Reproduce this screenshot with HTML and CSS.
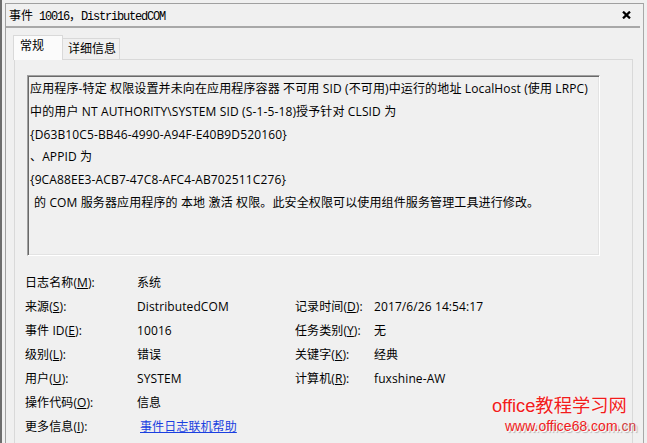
FILE: index.html
```html
<!DOCTYPE html>
<html lang="zh-CN">
<head>
<meta charset="utf-8">
<title>事件 10016，DistributedCOM</title>
<link rel="stylesheet" href="styles.css">
</head>
<body>
<div class="screen">
  <div class="frame">
    <div class="titlebar">
      <span class="title"><span class="cjk">事件</span> 10016<span class="cjk">，</span>DistributedCOM</span>
      <svg class="close" width="9" height="8" viewBox="0 0 9 8"><path d="M1 0.6 L8 7.4 M8 0.6 L1 7.4" stroke="#000" stroke-width="2.2" fill="none"/></svg>
    </div>
    <div class="rule"></div>
    <div class="tabs">
      <div class="tab active">常规</div>
      <div class="tab">详细信息</div>
    </div>
    <div class="panel">
      <div class="desc">
        <div class="line">应用程序-特定 权限设置并未向在应用程序容器 不可用 SID (不可用)中运行的地址 LocalHost (使用 LRPC)</div>
        <div class="line">中的用户 NT AUTHORITY\SYSTEM SID (S-1-5-18)授予针对 CLSID 为</div>
        <div class="line">{D63B10C5-BB46-4990-A94F-E40B9D520160}</div>
        <div class="line">、APPID 为</div>
        <div class="line">{9CA88EE3-ACB7-47C8-AFC4-AB702511C276}</div>
        <div class="line indent">的 COM 服务器应用程序的 本地 激活 权限。此安全权限可以使用组件服务管理工具进行修改。</div>
      </div>
      <div class="fields">
        <div>日志名称(<u>M</u>):</div><div>系统</div><div></div><div></div>
        <div>来源(<u>S</u>):</div><div>DistributedCOM</div><div>记录时间(<u>D</u>):</div><div>2017/6/26 14:54:17</div>
        <div>事件 ID(<u>E</u>):</div><div>10016</div><div>任务类别(<u>Y</u>):</div><div>无</div>
        <div>级别(<u>L</u>):</div><div>错误</div><div>关键字(<u>K</u>):</div><div>经典</div>
        <div>用户(<u>U</u>):</div><div>SYSTEM</div><div>计算机(<u>R</u>):</div><div>fuxshine-AW</div>
        <div>操作代码(<u>O</u>):</div><div>信息</div><div></div><div></div>
        <div>更多信息(<u>I</u>):</div><div><a class="link" href="#">事件日志联机帮助</a></div><div></div><div></div>
      </div>
    </div>
  </div>
  <div class="watermark">
    <div class="wm1">office教程学习网</div>
    <div class="wm2">www.office68.com<span class="cn">.cn</span></div>
  </div>
</div>
</body>
</html>
```
FILE: styles.css
```css
html, body {
  margin: 0;
  background: #f0f0f0;
}

.screen {
  position: relative;
  width: 647px;
  height: 443px;
  overflow: hidden;
  box-sizing: border-box;
  border-left: 2px solid #6d6d6d;
  padding: 3px 0 0 3px;
  font-family: "Open Sans", "Noto Sans CJK SC", sans-serif;
  font-size: 12px;
  color: #000;
}

.frame {
  width: 639px;
  height: 440px;
  box-sizing: border-box;
  border-top: 1px solid #a0a0a0;
  border-left: 1px solid #a0a0a0;
  border-right: 1px solid #a8a8a8;
  display: flex;
  flex-direction: column;
}

.titlebar {
  height: 22px;
  display: flex;
  align-items: center;
  justify-content: space-between;
  padding: 0 12px 0 3px;
}

.title {
  font-family: "Liberation Mono", monospace;
  font-size: 12px;
  letter-spacing: -1.2px;
  white-space: nowrap;
}

.title .cjk {
  font-family: "Noto Sans CJK SC", sans-serif;
  font-size: 12px;
  letter-spacing: 0;
}

.close {
  display: block;
}

.rule {
  height: 2px;
  background: #a8a8a8;
  margin-right: 3px;
}

.tabs {
  display: flex;
  align-items: flex-end;
  height: 24px;
  margin: 7px 0 0 7px;
  position: relative;
  z-index: 1;
}

.tab {
  box-sizing: border-box;
  line-height: 16px;
  white-space: nowrap;
}

.tab.active {
  width: 50px;
  height: 25px;
  margin-bottom: -1px;
  padding: 2px 0 0 6px;
  background: #fbfbfb;
  border: 1px solid #d9d9d9;
  border-bottom: none;
}

.tab:not(.active) {
  width: 57px;
  height: 21px;
  padding: 2px 0 0 5px;
  border-top: 1px solid #d9d9d9;
  border-right: 1px solid #d9d9d9;
}

.panel {
  flex: 1;
  width: 619px;
  box-sizing: border-box;
  margin-left: 8px;
  border: 1px solid #d9d9d9;
  border-bottom: none;
  padding: 15px 0 0 10px;
}

.desc {
  width: 573px;
  height: 181px;
  box-sizing: border-box;
  margin-left: 2px;
  border-top: 1px solid #a0a0a0;
  border-left: 1px solid #a0a0a0;
  border-right: 1px solid #ffffff;
  border-bottom: 1px solid #ffffff;
  box-shadow: inset 1px 1px 0 #696969, inset -1px -1px 0 #e3e3e3;
  padding: 2px 0 0 2px;
  line-height: 22.75px;
  letter-spacing: 0.13px;
}

.line {
  white-space: nowrap;
}

.line.indent {
  padding-left: 4px;
}

.fields {
  display: grid;
  grid-template-columns: 112px 158px 79px auto;
  grid-auto-rows: 24px;
  align-items: center;
  margin-top: 14px;
  white-space: nowrap;
  letter-spacing: 0.1px;
}

.link {
  color: #1a3fe0;
  text-decoration: underline;
  margin-left: 3px;
}

.watermark {
  position: absolute;
  left: 490px;
  top: 394px;
  font-family: "Liberation Sans", "Noto Sans CJK SC", sans-serif;
  color: #f21c1c;
  white-space: nowrap;
}

.wm1 {
  font-size: 18.3px;
  line-height: 23px;
  text-shadow: 0 0 2px #ffffff;
}

.wm2 {
  font-size: 14px;
  line-height: 18px;
  margin-left: 13px;
  text-shadow: 1px 1px 0 #ffffff, 2px 2px 1px #b0b0b0;
}

.wm2 .cn {
  color: #d04040;
}
```
